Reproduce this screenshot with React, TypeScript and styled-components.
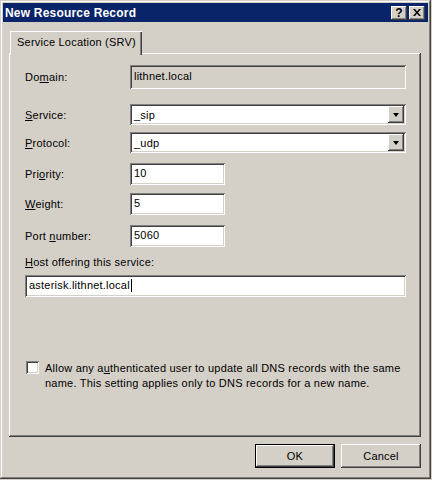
import React from 'react';
import styled, { createGlobalStyle, css } from 'styled-components';

const GlobalStyle = createGlobalStyle`
  html, body {
    margin: 0;
    padding: 0;
    background: #d4d0c8;
  }
  body {
    font-family: Tahoma, "Liberation Sans", Arial, sans-serif;
    font-size: 11px;
    letter-spacing: 0.22px;
    color: #000;
  }
`;

const raised = css`
  box-shadow: inset -1px -1px #404040, inset 1px 1px #ffffff,
    inset -2px -2px #808080, inset 2px 2px #d4d0c8;
`;

const sunken = css`
  box-shadow: inset 1px 1px #808080, inset -1px -1px #ffffff,
    inset 2px 2px #404040, inset -2px -2px #d4d0c8;
`;

const Window = styled.div`
  width: 431px;
  height: 479px;
  box-sizing: border-box;
  padding: 3px;
  background: #d4d0c8;
  display: flex;
  flex-direction: column;
  box-shadow: inset -1px -1px #404040, inset 1px 1px #d4d0c8,
    inset -2px -2px #808080, inset 2px 2px #ffffff;
`;

const TitleBar = styled.div`
  height: 19px;
  background: #0a246a;
  display: flex;
  align-items: center;
  justify-content: space-between;
  padding: 0 3px 0 2px;
`;

const Title = styled.div`
  color: #fff;
  font-weight: bold;
  font-size: 12px;
  letter-spacing: 0.2px;
`;

const TitleButtons = styled.div`
  display: flex;
  gap: 2px;
`;

const TitleButton = styled.div`
  width: 16px;
  height: 14px;
  background: #d4d0c8;
  ${raised};
  display: flex;
  align-items: center;
  justify-content: center;
  font-weight: bold;
  font-size: 12px;
  line-height: 14px;
`;

const Body = styled.div`
  flex: 1;
  display: flex;
  flex-direction: column;
  padding: 9px 7px 0 6px;
`;

const TabStrip = styled.div`
  display: flex;
  padding-left: 1px;
  position: relative;
  z-index: 1;
`;

const Tab = styled.div`
  width: 132px;
  height: 24px;
  margin-bottom: -2px;
  box-sizing: border-box;
  padding: 5px 0 0 7px;
  background: #d4d0c8;
  box-shadow: inset 1px 1px #ffffff, inset -1px 0 #404040, inset -2px 0 #808080;
`;

const Panel = styled.div`
  width: 412px;
  height: 384px;
  box-sizing: border-box;
  ${raised};
  padding: 0 0 0 16px;
  display: flex;
  flex-direction: column;
`;

const Field = styled.div<{ $gap: number }>`
  display: flex;
  align-items: center;
  margin-top: ${p => p.$gap}px;
`;

const Label = styled.div`
  width: 105px;
`;

const ReadOnlyBox = styled.div`
  width: 276px;
  height: 24px;
  box-sizing: border-box;
  ${sunken};
  background: #d4d0c8;
  padding: 5px 0 0 4px;
`;

const Combo = styled.div`
  width: 276px;
  height: 21px;
  box-sizing: border-box;
  ${sunken};
  background: #fff;
  padding: 2px;
  display: flex;
  align-items: center;
`;

const ComboText = styled.div`
  flex: 1;
  padding-left: 2px;
`;

const DropButton = styled.div`
  width: 16px;
  height: 17px;
  background: #d4d0c8;
  ${raised};
  display: flex;
  align-items: center;
  justify-content: center;

  &::after {
    content: '';
    border-left: 3.5px solid transparent;
    border-right: 3.5px solid transparent;
    border-top: 4px solid #000;
  }
`;

const TextBox = styled.div<{ $width: number }>`
  width: ${p => p.$width}px;
  height: 22px;
  box-sizing: border-box;
  ${sunken};
  background: #fff;
  padding: 4px 0 0 4px;
  display: flex;
  align-items: flex-start;
`;

const Caret = styled.span`
  display: inline-block;
  width: 1px;
  height: 13px;
  background: #000;
  margin-left: 1px;
`;

const HostLabel = styled.div`
  margin-top: 9px;
  height: 13px;
`;

const HostBox = styled(TextBox)`
  margin-top: 6px;
`;

const CheckRow = styled.div`
  display: flex;
  align-items: flex-start;
  margin-top: 64px;
  padding-left: 1px;
`;

const CheckBox = styled.div`
  width: 13px;
  height: 13px;
  flex: none;
  box-sizing: border-box;
  ${sunken};
  background: #fff;
`;

const CheckText = styled.div`
  margin-left: 6px;
  line-height: 15px;
`;

const ButtonRow = styled.div`
  display: flex;
  justify-content: flex-end;
  gap: 6px;
  margin-top: 7px;
`;

const Button = styled.div<{ $default?: boolean }>`
  width: 80px;
  height: 24px;
  box-sizing: border-box;
  background: #d4d0c8;
  display: flex;
  align-items: center;
  justify-content: center;
  ${p =>
    p.$default
      ? css`
          box-shadow: inset 0 0 0 1px #000, inset -2px -2px #404040,
            inset 2px 2px #ffffff, inset -3px -3px #808080;
        `
      : raised};
`;

const CloseIcon = () => (
  <svg width="8" height="7" viewBox="0 0 8 7">
    <path d="M0 0h2l2 2.5L6 0h2L5 3.5 8 7H6L4 4.5 2 7H0l3-3.5z" fill="#000" />
  </svg>
);

const App: React.FC = () => {
  return (
    <>
      <GlobalStyle />
      <Window>
        <TitleBar>
          <Title>New Resource Record</Title>
          <TitleButtons>
            <TitleButton>?</TitleButton>
            <TitleButton>
              <CloseIcon />
            </TitleButton>
          </TitleButtons>
        </TitleBar>
        <Body>
          <TabStrip>
            <Tab>Service Location (SRV)</Tab>
          </TabStrip>
          <Panel>
            <Field $gap={12}>
              <Label>
                Do<u>m</u>ain:
              </Label>
              <ReadOnlyBox>lithnet.local</ReadOnlyBox>
            </Field>
            <Field $gap={15}>
              <Label>
                <u>S</u>ervice:
              </Label>
              <Combo>
                <ComboText>_sip</ComboText>
                <DropButton />
              </Combo>
            </Field>
            <Field $gap={7}>
              <Label>
                <u>P</u>rotocol:
              </Label>
              <Combo>
                <ComboText>_udp</ComboText>
                <DropButton />
              </Combo>
            </Field>
            <Field $gap={10}>
              <Label>
                Pri<u>o</u>rity:
              </Label>
              <TextBox $width={95}>10</TextBox>
            </Field>
            <Field $gap={8}>
              <Label>
                <u>W</u>eight:
              </Label>
              <TextBox $width={95}>5</TextBox>
            </Field>
            <Field $gap={10}>
              <Label>
                Port <u>n</u>umber:
              </Label>
              <TextBox $width={95}>5060</TextBox>
            </Field>
            <HostLabel>
              <u>H</u>ost offering this service:
            </HostLabel>
            <HostBox $width={381}>
              asterisk.lithnet.local
              <Caret />
            </HostBox>
            <CheckRow>
              <CheckBox />
              <CheckText>
                Allow any a<u>u</u>thenticated user to update all DNS records with the same
                <br />
                name. This setting applies only to DNS records for a new name.
              </CheckText>
            </CheckRow>
          </Panel>
          <ButtonRow>
            <Button $default>OK</Button>
            <Button>Cancel</Button>
          </ButtonRow>
        </Body>
      </Window>
    </>
  );
};

export default App;
